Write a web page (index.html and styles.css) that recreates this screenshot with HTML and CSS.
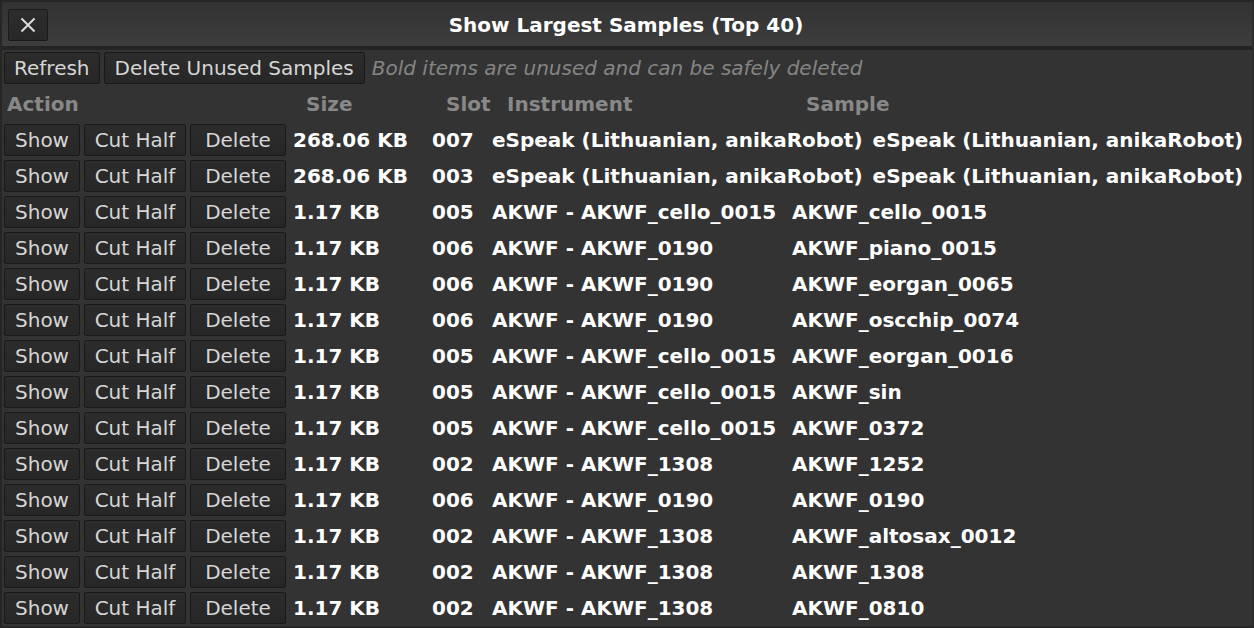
FILE: index.html
```html
<!DOCTYPE html>
<html lang="en">

<head>
  <meta charset="UTF-8">
  <meta name="viewport" content="width=device-width, initial-scale=1.0">
  <title>Show Largest Samples</title>
  <link rel="stylesheet" href="styles.css">
</head>

<body>
  <div class="window">
    <div class="titlebar">
      <div class="title-left">
        <button class="close-button" aria-label="Close">
          <svg width="16" height="16" viewBox="0 0 16 16">
            <path d="M1.5 1.5 L14.5 14.5 M14.5 1.5 L1.5 14.5" stroke="#dcdcdc" stroke-width="2" fill="none" />
          </svg>
        </button>
      </div>
      <div class="title">Show Largest Samples (Top 40)</div>
      <div class="title-right"></div>
    </div>

    <div class="content">
      <div class="toolbar">
        <button class="btn btn-refresh">Refresh</button>
        <button class="btn">Delete Unused Samples</button>
        <span class="hint">Bold items are unused and can be safely deleted</span>
      </div>

      <div class="table-head">
        <span>Action</span>
        <span>Size</span>
        <span>Slot</span>
        <span>Instrument</span>
        <span>Sample</span>
      </div>

      <div class="rows" id="rows"></div>
    </div>
  </div>

  <script>
    const samples = [
      ['268.06 KB', '007', 'eSpeak (Lithuanian, anikaRobot)', 'eSpeak (Lithuanian, anikaRobot)'],
      ['268.06 KB', '003', 'eSpeak (Lithuanian, anikaRobot)', 'eSpeak (Lithuanian, anikaRobot)'],
      ['1.17 KB', '005', 'AKWF - AKWF_cello_0015', 'AKWF_cello_0015'],
      ['1.17 KB', '006', 'AKWF - AKWF_0190', 'AKWF_piano_0015'],
      ['1.17 KB', '006', 'AKWF - AKWF_0190', 'AKWF_eorgan_0065'],
      ['1.17 KB', '006', 'AKWF - AKWF_0190', 'AKWF_oscchip_0074'],
      ['1.17 KB', '005', 'AKWF - AKWF_cello_0015', 'AKWF_eorgan_0016'],
      ['1.17 KB', '005', 'AKWF - AKWF_cello_0015', 'AKWF_sin'],
      ['1.17 KB', '005', 'AKWF - AKWF_cello_0015', 'AKWF_0372'],
      ['1.17 KB', '002', 'AKWF - AKWF_1308', 'AKWF_1252'],
      ['1.17 KB', '006', 'AKWF - AKWF_0190', 'AKWF_0190'],
      ['1.17 KB', '002', 'AKWF - AKWF_1308', 'AKWF_altosax_0012'],
      ['1.17 KB', '002', 'AKWF - AKWF_1308', 'AKWF_1308'],
      ['1.17 KB', '002', 'AKWF - AKWF_1308', 'AKWF_0810'],
    ];

    const rowsDiv = document.getElementById('rows');
    rowsDiv.innerHTML = samples.map(([size, slot, instrument, sample]) => `
      <div class="row">
        <button class="btn btn-show">Show</button>
        <button class="btn btn-cut">Cut Half</button>
        <button class="btn btn-delete">Delete</button>
        <span class="cell-size">${size}</span>
        <span class="cell-slot">${slot}</span>
        <span class="cell-instrument">${instrument}</span>
        <span class="cell-sample">${sample}</span>
      </div>
    `).join('');
  </script>
</body>

</html>
```

FILE: styles.css
```css
html,
body {
  margin: 0;
  padding: 0;
  background-color: #262626;
}

body {
  font-family: "DejaVu Sans", Verdana, sans-serif;
  font-size: 20px;
  color: #fff;
}

.window {
  box-sizing: border-box;
  width: 1254px;
  height: 628px;
  border: 2px solid #262626;
  border-right-color: #2c2c2c;
  background-color: #333;
  overflow: hidden;
  display: flex;
  flex-direction: column;
}

.titlebar {
  height: 44px;
  flex-shrink: 0;
  display: grid;
  grid-template-columns: 1fr auto 1fr;
  align-items: center;
  background: linear-gradient(#323232, #3d3d3d);
  border-bottom: 4px solid #242424;
}

.title-left {
  padding-left: 6px;
}

.close-button {
  width: 40px;
  height: 32px;
  margin-top: 1px;
  padding: 0;
  display: flex;
  align-items: center;
  justify-content: center;
  background: linear-gradient(#2d2d2d, #282828);
  border: 1px solid #1a1a1a;
  border-radius: 2px;
}

.title {
  font-weight: bold;
  color: #fff;
  padding-top: 2px;
  padding-right: 2px;
}

.content {
  flex: 1;
  padding: 2px 2px 0;
  display: flex;
  flex-direction: column;
  gap: 4px;
}

.btn {
  height: 32px;
  padding: 0 10px;
  font-family: inherit;
  font-size: 20px;
  color: #d6d6d6;
  background: linear-gradient(#2c2c2c, #272727);
  border: 1px solid #191919;
  border-radius: 2px;
  white-space: nowrap;
}

.toolbar {
  display: flex;
  align-items: center;
  gap: 4px;
}

.toolbar .btn-refresh {
  padding: 0 9px;
}

.hint {
  margin-left: 3px;
  font-style: italic;
  color: #858585;
}

.table-head {
  height: 32px;
  padding-left: 3px;
  display: grid;
  grid-template-columns: 299px 140px 61px 299px auto;
  align-items: center;
  font-weight: bold;
  color: #888;
}

.rows {
  display: flex;
  flex-direction: column;
  gap: 4px;
}

.row {
  height: 32px;
  display: flex;
  align-items: center;
  gap: 4px;
  font-weight: bold;
  white-space: nowrap;
}

.row .btn {
  padding: 0;
  flex-shrink: 0;
  font-weight: normal;
}

.btn-show {
  width: 76px;
}

.btn-cut {
  width: 102px;
}

.btn-delete {
  width: 96px;
}

.cell-size {
  width: 135px;
  margin-left: 3px;
  flex-shrink: 0;
}

.cell-slot {
  width: 56px;
  flex-shrink: 0;
}

.cell-instrument {
  min-width: 290px;
  padding-right: 6px;
  flex-shrink: 0;
}
```
